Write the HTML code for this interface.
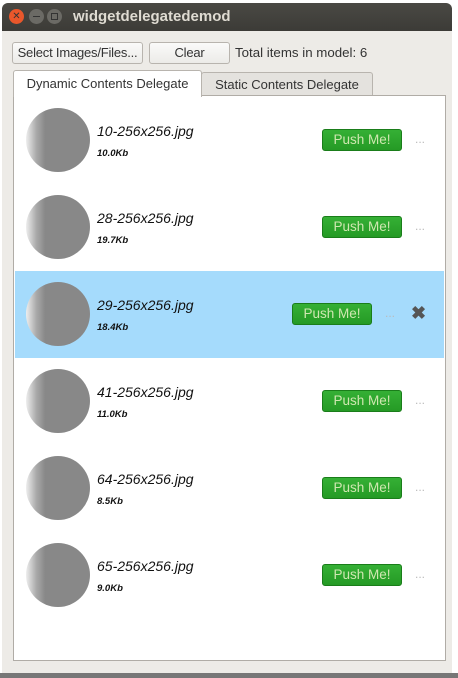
<!DOCTYPE html>
<html><head><meta charset="utf-8"><style>
*{margin:0;padding:0;box-sizing:border-box}
body{width:458px;height:678px;overflow:hidden;background:#fff;font-family:"Liberation Sans",sans-serif;position:relative}
.win{position:absolute;left:2px;top:3px;width:450px;height:670px;background:#edebe7;border-radius:6px 6px 0 0;overflow:hidden}
.title{height:28px;background:linear-gradient(#4a4944,#3c3b37);color:#dfdbd2;font-weight:bold;font-size:15px;line-height:28px;padding-left:71px}
.tb{position:absolute;top:6px;width:15px;height:15px;border-radius:50%}
.btn{position:absolute;height:22px;border:1px solid #b8b4ae;border-radius:3px;background:linear-gradient(#fafaf9,#ecebe8);font-size:13px;text-align:center;line-height:20px;color:#333;white-space:nowrap;letter-spacing:-0.2px}
.lbl{position:absolute;font-size:13.3px;color:#333;white-space:nowrap}
.tab{position:absolute;font-size:13px;color:#333;text-align:center;border:1px solid #b8b4ae;border-bottom:none;border-radius:3px 3px 0 0;white-space:nowrap}
.panel{position:absolute;left:11px;top:92px;width:433px;height:566px;border:1px solid #b0aca6;background:#fff}
.row{position:absolute;left:1px;width:429px;height:87px}
.sel{background:#a5dbfc}
.circ{position:absolute;left:11px;top:11px;width:64px;height:64px;border-radius:50%;background:linear-gradient(90deg,#eee 0%,#aaa 16%,#888 30%,#888 100%)}
.name{position:absolute;left:82px;top:26px;font-style:italic;font-size:14px;color:#111}
.size{position:absolute;left:82px;top:51px;font-style:italic;font-weight:bold;font-size:9.5px;color:#111}
.push{position:absolute;top:32px;width:80px;height:22px;border:1px solid #1a7d1a;border-radius:3px;background:linear-gradient(#35b035,#259a25);color:#cfe7b0;font-size:13.5px;text-align:center;line-height:20px}
.dots{position:absolute;top:35px;font-size:12px;color:#bbb}
.x{position:absolute;left:396px;top:32px;font-size:18px;color:#555;font-weight:bold}
</style></head><body>
<div style="position:absolute;left:0;top:673px;width:458px;height:5px;background:#777"></div>
<div class="win">
<div class="title">widgetdelegatedemod</div>
<div class="tb" style="left:7px;background:#e9572b;color:#333;font-size:10px;text-align:center;line-height:15px">✕</div>
<div class="tb" style="left:27px;background:#6b6a65"><div style="position:absolute;left:4px;top:7px;width:7px;height:1px;background:#333"></div></div>
<div class="tb" style="left:45px;background:#6b6a65"><div style="position:absolute;left:4px;top:4px;width:7px;height:7px;border:1px solid #333"></div></div>
<div class="btn" style="left:10px;top:39px;width:131px">Select Images/Files...</div>
<div class="btn" style="left:147px;top:39px;width:81px">Clear</div>
<div class="lbl" style="left:233px;top:42px">Total items in model: 6</div>
<div class="tab" style="left:199px;top:69px;width:172px;height:24px;background:#e4e2de;line-height:24px">Static Contents Delegate</div>
<div class="panel">
<div class="row" style="top:1px"><div class="circ"></div><div class="name">10-256x256.jpg</div><div class="size">10.0Kb</div><div class="push" style="left:307px">Push Me!</div><div class="dots" style="left:400px">...</div></div>
<div class="row" style="top:88px"><div class="circ"></div><div class="name">28-256x256.jpg</div><div class="size">19.7Kb</div><div class="push" style="left:307px">Push Me!</div><div class="dots" style="left:400px">...</div></div>
<div class="row sel" style="top:175px"><div class="circ"></div><div class="name">29-256x256.jpg</div><div class="size">18.4Kb</div><div class="push" style="left:277px">Push Me!</div><div class="dots" style="left:370px">...</div><div class="x">✖</div></div>
<div class="row" style="top:262px"><div class="circ"></div><div class="name">41-256x256.jpg</div><div class="size">11.0Kb</div><div class="push" style="left:307px">Push Me!</div><div class="dots" style="left:400px">...</div></div>
<div class="row" style="top:349px"><div class="circ"></div><div class="name">64-256x256.jpg</div><div class="size">8.5Kb</div><div class="push" style="left:307px">Push Me!</div><div class="dots" style="left:400px">...</div></div>
<div class="row" style="top:436px"><div class="circ"></div><div class="name">65-256x256.jpg</div><div class="size">9.0Kb</div><div class="push" style="left:307px">Push Me!</div><div class="dots" style="left:400px">...</div></div>
</div>
<div class="tab" style="left:11px;top:67px;width:189px;height:27px;background:#fff;line-height:26px;z-index:2">Dynamic Contents Delegate</div>
</div>
</body></html>
